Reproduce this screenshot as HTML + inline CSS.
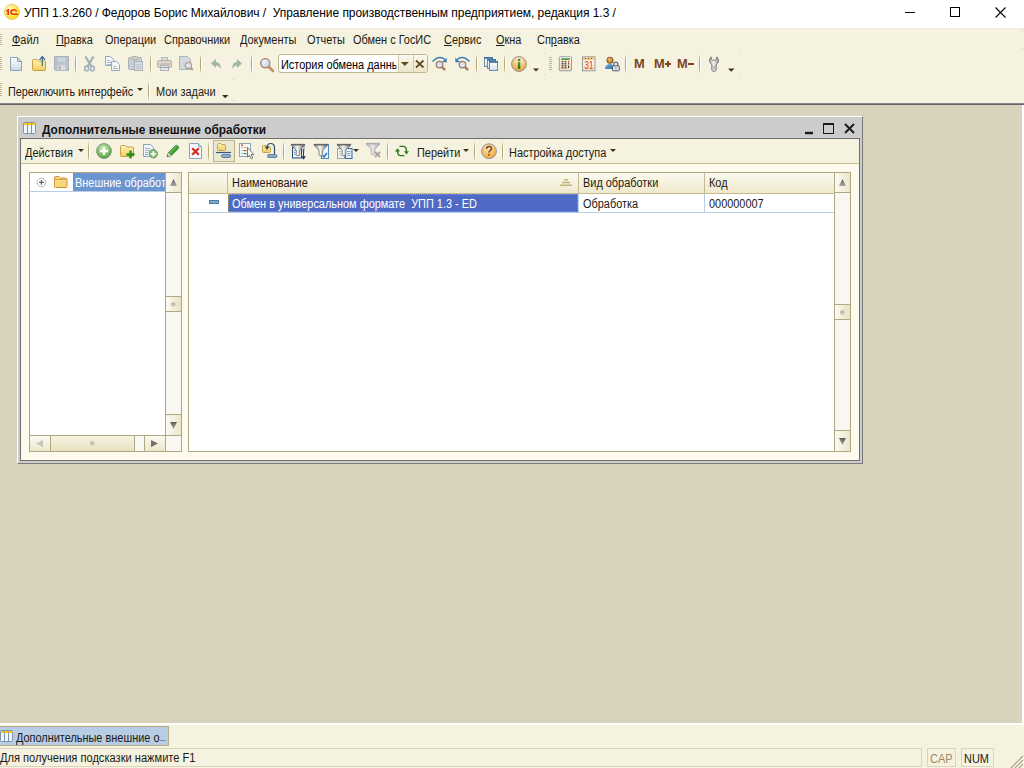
<!DOCTYPE html>
<html><head><meta charset="utf-8">
<style>
*{box-sizing:border-box;margin:0;padding:0}
html,body{width:1024px;height:768px;overflow:hidden;background:#f5f2df}
body{position:relative;font-family:"Liberation Sans",sans-serif;font-size:11px;color:#000}
.a{position:absolute}
.t{position:absolute;white-space:pre;line-height:14px;font-size:12px;color:#1c1a12;transform:scaleX(0.91);transform-origin:0 0}
.sep{position:absolute;width:2px;background:linear-gradient(rgba(176,165,118,0),#b3a878 30%,#b3a878 70%,rgba(176,165,118,0)) left/1px 100% no-repeat,linear-gradient(rgba(255,255,255,0),#fff 30%,#fff 70%,rgba(255,255,255,0)) right/1px 100% no-repeat}
.grip{position:absolute;left:0;width:2px;background:repeating-linear-gradient(#bdb595 0 1px,transparent 1px 2px)}
svg{position:absolute;overflow:visible}
</style></head><body>
<!-- title bar -->
<div class="a" style="left:0;top:0;width:1024px;height:28px;background:#fff"></div>
<div class="a" id="titletext" style="left:24px;top:6px;font-size:12px;line-height:15px;color:#000;white-space:pre;letter-spacing:-0.035px">УПП 1.3.260 / Федоров Борис Михайлович /  Управление производственным предприятием, редакция 1.3 /</div>

<!-- MDI area -->
<div class="a" style="left:0;top:103px;width:1024px;height:1px;background:#8a8a8a"></div>
<div class="a" style="left:0;top:104px;width:1024px;height:1px;background:#636363"></div>
<div class="a" style="left:0;top:105px;width:1022px;height:618px;background:#d9d3bd"></div>
<div class="a" style="left:1022px;top:105px;width:2px;height:618px;background:#fff"></div>
<div class="a" style="left:0;top:723px;width:1024px;height:2px;background:#fff"></div>

<!-- menu bar -->
<div class="a" style="left:0;top:28px;width:1024px;height:1px;background:#efebd5"></div>
<div class="grip" style="top:34px;height:11px"></div>
<div class="grip" style="top:57px;height:14px"></div>
<div class="grip" style="top:83px;height:13px"></div>

<div class="t" style="left:12px;top:33px"><u>Ф</u>айл</div>
<div class="t" style="left:56px;top:33px"><u>П</u>равка</div>
<div class="t" style="left:105px;top:33px">Операции</div>
<div class="t" style="left:164px;top:33px">Справочники</div>
<div class="t" style="left:240px;top:33px">Документы</div>
<div class="t" style="left:307px;top:33px">Отчеты</div>
<div class="t" style="left:353px;top:33px">Обмен с ГосИС</div>
<div class="t" style="left:444px;top:33px"><u>С</u>ервис</div>
<div class="t" style="left:496px;top:33px"><u>О</u>кна</div>
<div class="t" style="left:537px;top:33px">Сп<u>р</u>авка</div>

<!-- toolbar row 2 -->
<svg style="left:9px;top:56px" width="16" height="16"><defs><linearGradient id="gNew" x1="0" y1="0" x2="0" y2="1"><stop offset="0" stop-color="#fff"/><stop offset="1" stop-color="#c6d9ea"/></linearGradient></defs><path d="M1.5 1.5H8.5L12.5 5.5V14.5H1.5Z" fill="url(#gNew)" stroke="#8ea3b5"/><path d="M8.5 1.5V5.5H12.5Z" fill="#cfdbe6" stroke="#8ea3b5" stroke-linejoin="round"/></svg>
<svg style="left:31px;top:56px" width="16" height="16"><defs><linearGradient id="gFold" x1="0" y1="0" x2="0" y2="1"><stop offset="0" stop-color="#fff2b0"/><stop offset="1" stop-color="#f1cf62"/></linearGradient></defs><path d="M1.5 4.5Q1.5 3.5 2.5 3.5H6L7.5 5H13.5Q14.5 5 14.5 6V13.5Q14.5 14.5 13.5 14.5H2.5Q1.5 14.5 1.5 13.5Z" fill="url(#gFold)" stroke="#c9a04a"/><path d="M11.3 10V1.2" stroke="#3f6a8c" stroke-width="1.2"/><path d="M8.6 3.8L11.3 0.6L14 3.8" stroke="#3f6a8c" stroke-width="1.3" fill="none"/></svg>
<svg style="left:53px;top:56px" width="16" height="16"><path d="M1.5 0.5H15.5V14.5H2.5L1.5 13.5Z" fill="#b9c3cc" stroke="#a7b1bb"/><rect x="4.5" y="1.5" width="8" height="4.5" fill="#d3dde2" stroke="#c4c8c6"/><rect x="5.5" y="2.5" width="6" height="2.5" fill="#c4d8de"/><rect x="4.5" y="9" width="8" height="5" fill="#dcdcda" stroke="#c8ccd0"/><rect x="5.8" y="10.2" width="1.8" height="3.5" fill="#a4b0ba"/></svg>
<div class="sep" style="left:75px;top:54px;height:20px"></div>
<svg style="left:83px;top:56px" width="16" height="16"><path d="M2.5 0.5L8.5 10.5M10.5 0.5L4.5 10.5" stroke="#a3adb7" stroke-width="2.2" fill="none"/><rect x="1.8" y="10.3" width="3.6" height="4.4" rx="1" fill="none" stroke="#a3adb7" stroke-width="1.6"/><rect x="7.6" y="10.3" width="3.6" height="4.4" rx="1" fill="none" stroke="#a3adb7" stroke-width="1.6"/></svg>
<svg style="left:104px;top:56px" width="16" height="16"><path d="M1.5 0.5H6.5L9.5 3.5V9.5H1.5Z" fill="#f4f7fa" stroke="#9aabbb"/><path d="M3 4.5h3M3 6.5h4M3 8.5h4" stroke="#aab6c2"/><path d="M7.5 5.5H12.5L15.5 8.5V14.5H7.5Z" fill="#f4f7fa" stroke="#9aabbb"/><path d="M9 10.5h3M9 12.5h5" stroke="#aab6c2"/></svg>
<svg style="left:127px;top:56px" width="16" height="16"><rect x="1.5" y="1.5" width="13" height="12" rx="1" fill="#c8ced4" stroke="#a9b2bb"/><rect x="5" y="0.5" width="5.5" height="3" rx="1" fill="#d8d3bb" stroke="#b2ad95"/><rect x="7.5" y="5.5" width="8" height="9" fill="#d8dde2" stroke="#a9b2bb"/><path d="M9 8.5h5M9 10.5h5M9 12.5h5" stroke="#b9c1c9"/></svg>
<div class="sep" style="left:150px;top:54px;height:20px"></div>
<svg style="left:156px;top:56px" width="16" height="16"><rect x="5.5" y="1.5" width="6" height="4" fill="#d6dce2" stroke="#b0b8c0"/><rect x="1.5" y="4.5" width="14" height="7" rx="1.5" fill="#ddd5cc" stroke="#b7b0a8"/><path d="M3 8h11" stroke="#c4aca2"/><rect x="4.5" y="9.5" width="8" height="5" fill="#e4e6e8" stroke="#b0b4b8"/><path d="M5 11.5h7" stroke="#9aa0a6"/></svg>
<svg style="left:178px;top:56px" width="16" height="16"><path d="M1.5 0.5H9.5L12.5 3.5V13.5H1.5Z" fill="#d3d9df" stroke="#a9b5c1"/><circle cx="10.3" cy="9.5" r="3.2" fill="#dbe4ee" stroke="#b89a86" stroke-width="1.2"/><path d="M12.6 11.8L14.8 14" stroke="#b89a86" stroke-width="2"/></svg>
<div class="sep" style="left:200px;top:54px;height:20px"></div>
<svg style="left:210px;top:56px" width="16" height="16"><path d="M1 7.5L6 3V6Q10.5 6 11 13Q9 9.5 6 9.5V12Z" fill="#a3b5a6"/></svg>
<svg style="left:231px;top:56px" width="16" height="16"><path d="M11 7.5L6 3V6Q1.5 6 1 13Q3 9.5 6 9.5V12Z" fill="#a3b5a6"/></svg>
<div class="sep" style="left:251px;top:54px;height:20px"></div>
<svg style="left:259px;top:56px" width="16" height="16"><defs><radialGradient id="gMag" cx="0.4" cy="0.35" r="0.7"><stop offset="0" stop-color="#f0f5fc"/><stop offset="1" stop-color="#b8cde8"/></radialGradient></defs><path d="M10 11L14 15" stroke="#c58e68" stroke-width="2.6" stroke-linecap="round"/><circle cx="6.3" cy="7.3" r="4.6" fill="url(#gMag)" stroke="#b07a55" stroke-width="1.2"/></svg>
<div class="a" style="left:278px;top:54px;width:150px;height:19px;background:#fff;border:1px solid #c0b68e;border-radius:3px;overflow:hidden">
  <div class="t" style="left:2px;top:3px;width:127px;overflow:hidden;color:#000">История обмена данных</div>
  <div class="a" style="left:119px;top:0;width:15px;height:17px;background:linear-gradient(#fbf9ef,#ebe5c8);border-left:1px solid #d2c9a3"></div>
  <div class="a" style="left:134px;top:0;width:15px;height:17px;background:linear-gradient(#fbf9ef,#ebe5c8);border-left:1px solid #d2c9a3"></div>
</div>
<svg style="left:397px;top:56px" width="16" height="16"><path d="M3.8 6H11.8L7.8 10Z" fill="#5e4c1c"/></svg>
<svg style="left:412px;top:56px" width="16" height="16"><path d="M4 4.5L11.5 11.5M11.5 4.5L4 11.5" stroke="#5e4d1e" stroke-width="1.8"/></svg>
<svg style="left:431px;top:56px" width="16" height="16"><path d="M1.5 5.5Q8 -1.5 14 3.5" stroke="#3e7cb6" stroke-width="1.4" fill="none"/><path d="M15.8 1.8L15.5 6.5L11 6Z" fill="#3e7cb6"/><path d="M10.5 10.5L13.5 13.5" stroke="#a5785a" stroke-width="2.4" stroke-linecap="round"/><circle cx="8.5" cy="8.6" r="3.3" fill="#d7e3f2" stroke="#9c7a66" stroke-width="1.2"/></svg>
<svg style="left:455px;top:56px" width="16" height="16"><path d="M14.5 5.5Q8 -1.5 2 3.5" stroke="#3e7cb6" stroke-width="1.4" fill="none"/><path d="M0.2 1.8L0.5 6.5L5 6Z" fill="#3e7cb6"/><path d="M9.5 10.5L12.5 13.5" stroke="#a5785a" stroke-width="2.4" stroke-linecap="round"/><circle cx="7.5" cy="8.6" r="3.3" fill="#d7e3f2" stroke="#9c7a66" stroke-width="1.2"/></svg>
<div class="sep" style="left:476px;top:54px;height:20px"></div>
<svg style="left:483px;top:56px" width="16" height="16"><defs><linearGradient id="gWin" x1="0" y1="0" x2="0" y2="1"><stop offset="0" stop-color="#ffffff"/><stop offset="1" stop-color="#d4e2ef"/></linearGradient></defs><rect x="1.5" y="1.5" width="8" height="9" fill="url(#gWin)" stroke="#6d8aa6"/><rect x="1" y="1" width="9" height="1.8" fill="#41709e"/><rect x="4.5" y="3.5" width="8" height="9" fill="url(#gWin)" stroke="#6d8aa6"/><rect x="4" y="3" width="9" height="1.8" fill="#41709e"/><rect x="6.5" y="5.5" width="8" height="9" fill="url(#gWin)" stroke="#6d8aa6"/><rect x="6" y="5" width="9" height="1.8" fill="#41709e"/></svg>
<div class="sep" style="left:504px;top:54px;height:20px"></div>
<svg style="left:511px;top:56px" width="16" height="16"><defs><radialGradient id="gInfo" cx="0.5" cy="0.25" r="0.8"><stop offset="0" stop-color="#fff4dc"/><stop offset="0.55" stop-color="#f6c274"/><stop offset="1" stop-color="#e89a34"/></radialGradient><linearGradient id="gI" x1="0" y1="0" x2="0" y2="1"><stop offset="0" stop-color="#5aa838"/><stop offset="1" stop-color="#1f6a12"/></linearGradient></defs><circle cx="8" cy="8" r="7.4" fill="url(#gInfo)" stroke="#8a8a86" stroke-width="0.9"/><path d="M6.8 3.6L8.3 2.8L9.3 3.6V5H6.8Z" fill="#2f8a2a"/><rect x="6.8" y="5.8" width="2.5" height="7" fill="url(#gI)"/></svg>
<svg style="left:533px;top:68px" width="6" height="4"><path d="M0 0.5H6L3 3.5Z" fill="#3e3215"/></svg>
<div class="a" style="left:544px;top:53px;width:1px;height:1px;background:#d2ccb6"></div>
<div class="a" style="left:544px;top:74px;width:1px;height:1px;background:#d2ccb6"></div>
<div class="a" style="left:549px;top:57px;width:3px;height:14px;background:repeating-linear-gradient(#bdb595 0 1px,transparent 1px 2px)"></div>
<svg style="left:558px;top:56px" width="16" height="16"><defs><linearGradient id="gCalc" x1="0" y1="0" x2="0" y2="1"><stop offset="0" stop-color="#fffdf8"/><stop offset="1" stop-color="#f8d8b0"/></linearGradient></defs><rect x="1.3" y="0.8" width="12.2" height="14" rx="0.8" fill="url(#gCalc)" stroke="#8898a8" stroke-width="0.9"/><rect x="3.2" y="2.3" width="8.6" height="1.8" fill="#4a9a3a"/><g fill="#3a3a3a"><rect x="3.5" y="5.2" width="2" height="1.2"/><rect x="6.5" y="5.2" width="2" height="1.2"/><rect x="3.5" y="7.2" width="2" height="1.2"/><rect x="6.5" y="7.2" width="2" height="1.2"/><rect x="3.5" y="9.2" width="2" height="1.2"/><rect x="6.5" y="9.2" width="2" height="1.2"/><rect x="3.5" y="11.2" width="2" height="1.2"/><rect x="6.5" y="11.2" width="2" height="1.2"/><rect x="10" y="7.2" width="1.2" height="1.2"/><rect x="10" y="9.5" width="1.2" height="2.5"/></g><rect x="10" y="5" width="1.2" height="1.6" fill="#e03020"/></svg>
<svg style="left:581px;top:56px" width="16" height="16"><defs><linearGradient id="gCal" x1="0" y1="0" x2="0" y2="1"><stop offset="0" stop-color="#fffdf8"/><stop offset="1" stop-color="#f8dcb8"/></linearGradient></defs><rect x="1.5" y="0.8" width="12.5" height="14" fill="url(#gCal)" stroke="#8c96a0" stroke-width="0.9"/><rect x="2" y="1.2" width="11.5" height="2.6" fill="#f2c27a"/><g fill="#6a4a2a"><rect x="4" y="2" width="1" height="1"/><rect x="7" y="2" width="1" height="1"/><rect x="10" y="2" width="1" height="1"/></g><text x="3.6" y="12.8" font-family="Liberation Sans" font-size="11.5" textLength="8.6" lengthAdjust="spacingAndGlyphs" fill="#e42e1c">31</text></svg>
<svg style="left:604px;top:56px" width="16" height="16"><defs><radialGradient id="gHead" cx="0.45" cy="0.4" r="0.6"><stop offset="0" stop-color="#f4c070"/><stop offset="1" stop-color="#a86818"/></radialGradient><linearGradient id="gBody" x1="0" y1="0" x2="1" y2="1"><stop offset="0" stop-color="#70b8e8"/><stop offset="1" stop-color="#2a6aa8"/></linearGradient></defs><circle cx="6" cy="4.3" r="3.2" fill="url(#gHead)" stroke="#4a3a20" stroke-width="0.5"/><path d="M1 13Q1.5 8 6 8Q8.5 8 9 9.5V13Z" fill="url(#gBody)"/><path d="M9.8 10V8.2Q9.8 6.2 11.8 6.2Q13.8 6.2 13.8 8.2V10" stroke="#5a6878" stroke-width="1.3" fill="none"/><rect x="8.5" y="9.8" width="6.8" height="5" rx="0.8" fill="#dfe6ee" stroke="#4e5a68" stroke-width="1"/><rect x="11.3" y="11.3" width="1.2" height="2.2" fill="#8a96a4"/></svg>
<div class="sep" style="left:625px;top:54px;height:20px"></div>
<div class="a" style="left:634px;top:56px;font-size:13.5px;font-weight:bold;line-height:15px;color:#7a4624;white-space:pre;transform:scaleX(0.95);transform-origin:0 0">M</div>
<div class="a" style="left:654px;top:56px;font-size:13.5px;font-weight:bold;line-height:15px;color:#7a4624;white-space:pre;transform:scaleX(0.95);transform-origin:0 0">M</div>
<div class="a" style="left:665px;top:63px;width:6px;height:2px;background:#7a4624"></div>
<div class="a" style="left:667px;top:61px;width:2px;height:6px;background:#7a4624"></div>
<div class="a" style="left:677px;top:56px;font-size:13.5px;font-weight:bold;line-height:15px;color:#7a4624;white-space:pre;transform:scaleX(0.95);transform-origin:0 0">M</div>
<div class="a" style="left:688px;top:63px;width:6px;height:2px;background:#7a4624"></div>
<div class="sep" style="left:699px;top:54px;height:20px"></div>
<svg style="left:706px;top:56px" width="16" height="16"><defs><linearGradient id="gWr" x1="0" y1="0" x2="1" y2="0"><stop offset="0" stop-color="#a8a8a8"/><stop offset="0.45" stop-color="#f4f4f4"/><stop offset="1" stop-color="#9a9a9a"/></linearGradient></defs><path d="M5.3 0.9A4.6 4.6 0 0 0 5.8 8.5V13.3Q5.8 15.4 8 15.4Q10.2 15.4 10.2 13.3V8.5A4.6 4.6 0 0 0 10.7 0.9V3.2Q10 4.3 8 4.3Q6 4.3 5.3 3.2Z" fill="url(#gWr)" stroke="#6e6e6e" stroke-width="0.9"/><rect x="7.1" y="9.5" width="1.8" height="4" rx="0.9" fill="#b8b8b8"/></svg>
<svg style="left:728px;top:68px" width="7" height="4"><path d="M0 0.5H6.5L3.25 3.8Z" fill="#3e3215"/></svg>
<div class="a" style="left:739px;top:53px;width:1px;height:1px;background:#d2ccb6"></div>
<div class="a" style="left:739px;top:74px;width:1px;height:1px;background:#d2ccb6"></div>

<!-- toolbar row 3 -->
<div class="t" style="left:8px;top:85px;transform:scaleX(0.9)">Переключить интерфейс</div>
<svg style="left:137px;top:88px" width="6" height="3"><path d="M0 0H6L3 3Z" fill="#3e3215"/></svg>
<div class="sep" style="left:148px;top:81px;height:20px"></div>
<div class="t" style="left:156px;top:85px">Мои задачи</div>
<svg style="left:222px;top:95px" width="7" height="4"><path d="M0 0H6.5L3.25 3.3Z" fill="#3e3215"/></svg>
<div class="a" style="left:233px;top:79px;width:1px;height:1px;background:#d2ccb6"></div>
<div class="a" style="left:233px;top:100px;width:1px;height:1px;background:#d2ccb6"></div>
<!-- logo -->
<svg style="left:4px;top:4px" width="16" height="16"><defs><radialGradient id="gLogo" cx="0.35" cy="0.3" r="0.8"><stop offset="0" stop-color="#fff8b0"/><stop offset="1" stop-color="#ffd400"/></radialGradient></defs><circle cx="8" cy="7.9" r="7.6" fill="url(#gLogo)" stroke="#dcc770" stroke-width="0.8"/><path d="M2 6.6L4 5H5V11H3.3V7.3L2.3 7.8Z" fill="#e8341a"/><path d="M13 7.5Q13 5 10 5Q6.2 5 6.2 8Q6.2 11 9.5 11H14V9.6H9.6Q7.9 9.6 7.9 8Q7.9 6.4 10 6.4Q11.5 6.4 11.5 7.5Z" fill="#e8341a"/></svg>
<!-- window controls -->
<div class="a" style="left:905px;top:12px;width:10px;height:1px;background:#000"></div>
<div class="a" style="left:950px;top:7px;width:10px;height:10px;border:1px solid #000"></div>
<svg style="left:995px;top:7px" width="11" height="11"><path d="M0.5 0.5L10.5 10.5M10.5 0.5L0.5 10.5" stroke="#000" stroke-width="1.1"/></svg>

<!-- window -->
<div class="a" style="left:17px;top:116px;width:846px;height:348px;background:#cccccc;border-left:1px solid #fff;border-top:1px solid #fff;border-right:1px solid #7a7a7a;border-bottom:1px solid #7a7a7a"></div>
<div class="a" style="left:20px;top:138px;width:840px;height:323px;background:#fefaee;border:1px solid #6f6f6f"></div>
<div class="a" style="left:21px;top:139px;width:838px;height:25px;background:#f5f2df;border-bottom:1px solid #c6bd93"></div>
<div class="a" style="left:42px;top:123px;font-size:12.5px;font-weight:bold;line-height:15px;color:#111;white-space:pre;transform:scaleX(0.952);transform-origin:0 0">Дополнительные внешние обработки</div>

<svg style="left:23px;top:122px" width="14" height="13"><rect x="0.5" y="0.5" width="12" height="11" rx="1" fill="#eef6fc" stroke="#7d93a8"/><path d="M4.5 1V11M8.5 1V11" stroke="#7d93a8"/><rect x="1" y="1" width="3.5" height="2" fill="#f5c818"/><rect x="5" y="1" width="3.5" height="2" fill="#f5c818"/><rect x="9" y="1" width="3.5" height="2" fill="#f5c818"/></svg>
<svg style="left:805px;top:131px" width="9" height="4"><rect x="0" y="0.8" width="8" height="2.4" fill="#1a1a1a"/></svg>
<svg style="left:823px;top:123px" width="12" height="12"><rect x="0.5" y="0.5" width="10" height="10" fill="none" stroke="#1a1a1a" stroke-width="1"/><rect x="0" y="0" width="11" height="2" fill="#1a1a1a"/></svg>
<svg style="left:844px;top:123px" width="11" height="11"><path d="M1 1L10 10M10 1L1 10" stroke="#1a1a1a" stroke-width="1.9"/></svg>
<div class="t" style="left:25px;top:146px">Действия</div>
<svg style="left:78px;top:149px" width="6" height="3"><path d="M0 0H6L3 3Z" fill="#3e3215"/></svg>
<svg style="left:96px;top:143px" width="16" height="16"><defs><radialGradient id="gPlus" cx="0.45" cy="0.3" r="0.75"><stop offset="0" stop-color="#c9e8b4"/><stop offset="0.55" stop-color="#86c46a"/><stop offset="1" stop-color="#4c9a3a"/></radialGradient></defs><circle cx="8" cy="8" r="7.4" fill="url(#gPlus)" stroke="#7e8a80" stroke-width="0.9"/><path d="M8 4V12M4 8H12" stroke="#fff" stroke-width="2.4"/></svg>
<svg style="left:119px;top:143px" width="17" height="17"><defs><linearGradient id="gFold2" x1="0" y1="0" x2="0" y2="1"><stop offset="0" stop-color="#fff3b8"/><stop offset="1" stop-color="#f0cc60"/></linearGradient></defs><path d="M1.5 3.5Q1.5 2.5 2.5 2.5H6L7.5 4H13.5Q14.5 4 14.5 5V12.5Q14.5 13.5 13.5 13.5H2.5Q1.5 13.5 1.5 12.5Z" fill="url(#gFold2)" stroke="#c9a04a"/><path d="M11.5 7.5V15.5M7.5 11.5H15.5" stroke="#22901c" stroke-width="2.3"/></svg>
<svg style="left:142px;top:143px" width="16" height="16"><path d="M1.5 1.5H8.5L11.5 4.5V13.5H1.5Z" fill="#f2f6fa" stroke="#8ea3b5"/><path d="M3 5.5h5M3 7.5h5M3 9.5h3M3 11.5h3" stroke="#9fb3c6"/><circle cx="11.3" cy="10.8" r="4.2" fill="#7fbd68" stroke="#6f8a78" stroke-width="0.9"/><path d="M11.3 8.2V13.4M8.7 10.8H13.9" stroke="#fff" stroke-width="1.7"/></svg>
<svg style="left:165px;top:143px" width="16" height="16"><path d="M2 13.8L3.2 10L10.5 2.7Q11.5 1.8 12.5 2.7L13.3 3.5Q14.2 4.5 13.3 5.5L6 12.8Z" fill="#3fa236" stroke="#2c7a26" stroke-width="0.8"/><path d="M4 10.5L11.5 3" stroke="#7ad06a" stroke-width="1"/><path d="M2 13.8L3.2 10L6 12.8Z" fill="#e8e4c8"/><path d="M2 13.8L2.6 12L3.8 13.2Z" fill="#333"/></svg>
<svg style="left:188px;top:143px" width="16" height="16"><path d="M1.5 0.5H10.5L13.5 3.5V15.5H1.5Z" fill="#f4f8fc" stroke="#8ea3b5"/><path d="M10.5 0.5V3.5H13.5" fill="#d6e0ea" stroke="#8ea3b5"/><path d="M4.2 5.2L10.8 11.8M10.8 5.2L4.2 11.8" stroke="#d42a1e" stroke-width="2.2"/></svg>
<div class="a" style="left:213px;top:140px;width:22px;height:22px;background:#ece7d2;border:1px solid #bcb389"></div>
<svg style="left:216px;top:143px" width="16" height="16"><defs><linearGradient id="gFold3" x1="0" y1="0" x2="0" y2="1"><stop offset="0" stop-color="#fff3b8"/><stop offset="1" stop-color="#f0cc60"/></linearGradient></defs><path d="M1.5 1.5Q1.5 0.5 2.5 0.5H4.5L5.5 1.5H8.5Q9.5 1.5 9.5 2.5V6.5Q9.5 7.5 8.5 7.5H2.5Q1.5 7.5 1.5 6.5Z" fill="url(#gFold3)" stroke="#c9a04a"/><path d="M0 9.5H15" stroke="#2d5b86" stroke-width="1.2"/><rect x="5.5" y="11.5" width="9" height="3" rx="1.5" fill="#8fb0cc" stroke="#5a7fa2"/></svg>
<svg style="left:238px;top:143px" width="17" height="17"><rect x="1.5" y="0.5" width="11" height="13" fill="#f4f8fc" stroke="#8ea3b5"/><rect x="3" y="1.5" width="2" height="1.2" fill="#e0301c"/><rect x="5.5" y="4" width="3" height="1.2" fill="#f0c040"/><rect x="5.5" y="7" width="3" height="1.2" fill="#b06030"/><rect x="5.5" y="10" width="3" height="1.2" fill="#3a9a3a"/><path d="M3.5 4.5h1M3.5 7.5h1M3.5 10.5h1" stroke="#888"/><path d="M9.5 4.5L9.5 14L11.5 12.3L13.3 15.8L14.8 15L13 11.5H15.8Z" fill="#fff" stroke="#6a6a6a" stroke-width="0.9" stroke-linejoin="round"/></svg>
<svg style="left:261px;top:143px" width="17" height="16"><defs><linearGradient id="gFold4" x1="0" y1="0" x2="0" y2="1"><stop offset="0" stop-color="#fff3b8"/><stop offset="1" stop-color="#f0cc60"/></linearGradient></defs><path d="M1.5 3.5Q1.5 2.5 2.5 2.5H4.5L5.5 3.5H8.5Q9.5 3.5 9.5 4.5V8.5Q9.5 9.5 8.5 9.5H2.5Q1.5 9.5 1.5 8.5Z" fill="url(#gFold4)" stroke="#c9a04a"/><path d="M13.5 12V5Q13.5 0.5 9.5 0.5Q6.5 0.5 6 4" stroke="#2d4f72" stroke-width="1.2" fill="none"/><path d="M3.5 3.5L6 7L8.5 3.5Z" fill="#2d4f72"/><rect x="6.5" y="11.5" width="9.5" height="3" rx="1.5" fill="#8fb0cc" stroke="#5a7fa2"/></svg>
<svg style="left:291px;top:144px" width="16" height="17"><defs><linearGradient id="gF1" x1="0" y1="0" x2="1" y2="0"><stop offset="0" stop-color="#8a8a8a"/><stop offset="0.45" stop-color="#f4f4f4"/><stop offset="1" stop-color="#6a6a6a"/></linearGradient></defs><rect x="1.5" y="3.5" width="9" height="10.5" fill="#eaf3fb" stroke="#2a4a72"/><path d="M3 6.5h1.5M3 8.5h1.5M3 10.5h1.5" stroke="#8aa4c0"/><path d="M0.3 0.3H13.7V1.3L8.8 6.2V10.8Q8.8 11.8 7 11.8Q5.2 11.8 5.2 10.8V6.2L0.3 1.3Z" fill="url(#gF1)" stroke="#6a6a6a" stroke-width="0.8"/><rect x="0.3" y="0.2" width="13.4" height="1.2" fill="#5e5e5e"/><path d="M12.5 5V13" stroke="#1f3e66" stroke-width="1.1"/><path d="M10 12.2H15L12.5 15.8Z" fill="#1f3e66"/><path d="M11.5 3.5L14 2M11.5 5.5L14 4M11.5 7.5L14 6" stroke="#5a7a9a" stroke-width="0.7"/></svg>
<svg style="left:313px;top:144px" width="17" height="17"><defs><linearGradient id="gF2" x1="0" y1="0" x2="1" y2="0"><stop offset="0" stop-color="#8a8a8a"/><stop offset="0.45" stop-color="#f4f4f4"/><stop offset="1" stop-color="#6a6a6a"/></linearGradient></defs><rect x="8.5" y="0.5" width="7" height="14" fill="#eef5fb" stroke="#4a8ac0"/><path d="M9.5 11.5L11 13L14 9" stroke="#2a6aaa" stroke-width="1.4" fill="none"/><path d="M1.1 0.3H14.5V1.3L9.600000000000001 6.2V10.8Q9.600000000000001 11.8 7.8 11.8Q6.0 11.8 6.0 10.8V6.2L1.1 1.3Z" fill="url(#gF2)" stroke="#6a6a6a" stroke-width="0.8"/><rect x="1.1" y="0.2" width="13.4" height="1.2" fill="#5e5e5e"/></svg>
<svg style="left:336px;top:144px" width="17" height="17"><defs><linearGradient id="gF3" x1="0" y1="0" x2="1" y2="0"><stop offset="0" stop-color="#8a8a8a"/><stop offset="0.45" stop-color="#f4f4f4"/><stop offset="1" stop-color="#6a6a6a"/></linearGradient></defs><rect x="1.5" y="4.5" width="7" height="10" fill="#eef3f6" stroke="#9aa4aa"/><rect x="9.5" y="4.5" width="6.5" height="10" fill="#eaf3fb" stroke="#2f6aa2"/><path d="M3.5 7.5h2M3.5 9.5h2M3.5 11.5h2" stroke="#b0b8bc"/><path d="M11 7.5h3.5M11 9.5h3.5M11 11.5h3.5" stroke="#8aa4c8"/><path d="M1.3 0.3H14.7V1.3L9.8 6.2V10.8Q9.8 11.8 8 11.8Q6.2 11.8 6.2 10.8V6.2L1.3 1.3Z" fill="url(#gF3)" stroke="#6a6a6a" stroke-width="0.8"/><rect x="1.3" y="0.2" width="13.4" height="1.2" fill="#5e5e5e"/></svg>
<svg style="left:353px;top:149px" width="6" height="3"><path d="M0 0H6L3 3Z" fill="#3e3215"/></svg>
<svg style="left:366px;top:143px" width="16" height="16"><defs><linearGradient id="gF4" x1="0" y1="0" x2="1" y2="0"><stop offset="0" stop-color="#b4b6b8"/><stop offset="0.45" stop-color="#e8e9ea"/><stop offset="1" stop-color="#a8aaac"/></linearGradient></defs><path d="M0.3 0.3H13.7V1.3L8.8 6.2V10.8Q8.8 11.8 7 11.8Q5.2 11.8 5.2 10.8V6.2L0.3 1.3Z" fill="url(#gF4)" stroke="#a4a6a8" stroke-width="0.8"/><rect x="0.3" y="0.2" width="13.4" height="1.2" fill="#a8aaac"/><path d="M9 9L14 14M14 9L9 14" stroke="#b8a0a4" stroke-width="2"/></svg>
<svg style="left:394px;top:143px" width="16" height="16"><path d="M5.5 3.4H9.2Q12.5 3.4 12.5 8.5" stroke="#2a7a1e" stroke-width="1.4" fill="none"/><path d="M10 8.2H15L12.5 11.4Z" fill="#2a7a1e"/><path d="M10.5 12.6H6.8Q3.5 12.6 3.5 8" stroke="#2a7a1e" stroke-width="1.4" fill="none"/><path d="M1 8.5H6L3.5 5.2Z" fill="#2a7a1e"/></svg>
<svg style="left:463px;top:149px" width="6" height="3"><path d="M0 0H6L3 3Z" fill="#3e3215"/></svg>
<svg style="left:481px;top:143px" width="16" height="16"><defs><radialGradient id="gHelp" cx="0.45" cy="0.3" r="0.75"><stop offset="0" stop-color="#fde7c0"/><stop offset="0.6" stop-color="#f5bb62"/><stop offset="1" stop-color="#eea234"/></radialGradient></defs><circle cx="8" cy="8.2" r="7.4" fill="url(#gHelp)" stroke="#8a8c98" stroke-width="0.9"/><path d="M5.6 6Q5.6 3.6 8 3.6Q10.4 3.6 10.4 5.8Q10.4 7.2 8.8 7.9Q8 8.3 8 9.8" stroke="#7a4a1e" stroke-width="1.5" fill="none"/><rect x="7.2" y="11" width="1.6" height="1.6" fill="#7a4a1e"/></svg>
<svg style="left:610px;top:149px" width="6" height="3"><path d="M0 0H6L3 3Z" fill="#3e3215"/></svg>
<div class="sep" style="left:88px;top:141px;height:21px"></div>
<div class="sep" style="left:208px;top:141px;height:21px"></div>
<div class="sep" style="left:283px;top:141px;height:21px"></div>
<div class="sep" style="left:387px;top:141px;height:21px"></div>
<div class="t" style="left:417px;top:146px">Перейти</div>
<div class="sep" style="left:474px;top:141px;height:21px"></div>
<div class="sep" style="left:502px;top:141px;height:21px"></div>
<div class="t" style="left:509px;top:146px">Настройка доступа</div>

<!-- tree panel -->
<div class="a" style="left:29px;top:172px;width:153px;height:280px;background:#fff;border:1px solid #b0a784"></div>
<div class="a" style="left:73px;top:173px;width:92px;height:18px;background:#6b95cf"></div>
<div class="a" style="left:30px;top:191px;width:135px;height:1px;background:#b9cde6"></div>
<div class="t" style="left:75px;top:176px;color:#fff;width:99px;overflow:hidden">Внешние обработки</div>
<svg style="left:36px;top:177px" width="11" height="11"><circle cx="5.4" cy="5.4" r="4.3" fill="#fff" stroke="#b8b8b8" stroke-width="1"/><path d="M5.4 3V7.8M3 5.4H7.8" stroke="#5a5a5a" stroke-width="1.1"/></svg>
<svg style="left:53px;top:175px" width="16" height="14"><path d="M1.5 3Q1.5 1.5 3 1.5H6L7.5 3H12.5Q14 3 14 4.5V11.5Q14 12.5 13 12.5H2.5Q1.5 12.5 1.5 11.5Z" fill="#f6d878" stroke="#d0913a"/><path d="M2 4.5H13.5" stroke="#d89c48"/><path d="M2 5.2H13.5V6H2Z" fill="#fbe7a0"/></svg>
<!-- tree vscroll -->
<div class="a" style="left:165px;top:172px;width:17px;height:264px;background:#f8f7f1;border:1px solid #b0a784"></div>
<div class="a" style="left:166px;top:173px;width:15px;height:20px;background:linear-gradient(90deg,#fbfaf2,#ece6c9);border-bottom:1px solid #b0a784"></div>
<svg style="left:170px;top:179px" width="8" height="7"><defs><linearGradient id="gArr" x1="0" y1="0" x2="0" y2="1"><stop offset="0" stop-color="#5a5a5a"/><stop offset="1" stop-color="#a8a8a8"/></linearGradient></defs><path d="M3.5 0L7 7H0Z" fill="url(#gArr)"/></svg>
<div class="a" style="left:165px;top:296px;width:17px;height:16px;background:linear-gradient(90deg,#fbfaf2,#e8e2c0);border:1px solid #b0a784"></div>
<div class="a" style="left:171px;top:302px;width:5px;height:5px;border-radius:50%;background:radial-gradient(circle at 30% 30%,#b8b4a0,#e4e0cc)"></div>
<div class="a" style="left:166px;top:414px;width:15px;height:21px;background:linear-gradient(90deg,#fbfaf2,#ece6c9);border-top:1px solid #b0a784"></div>
<svg style="left:170px;top:422px" width="8" height="7"><defs><linearGradient id="gArr2" x1="0" y1="0" x2="0" y2="1"><stop offset="0" stop-color="#5a5a5a"/><stop offset="1" stop-color="#a8a8a8"/></linearGradient></defs><path d="M0 0H7L3.5 7Z" fill="url(#gArr2)"/></svg>
<!-- tree hscroll -->
<div class="a" style="left:29px;top:435px;width:153px;height:17px;background:#f8f7f1;border:1px solid #b0a784"></div>
<div class="a" style="left:30px;top:436px;width:21px;height:15px;background:linear-gradient(#fbfaf2,#ece6c9);border-right:1px solid #b0a784"></div>
<svg style="left:36px;top:440px" width="8" height="8"><path d="M7 0V7L0 3.5Z" fill="#c8c6bc"/></svg>
<div class="a" style="left:51px;top:436px;width:84px;height:15px;background:linear-gradient(#f6f3e2,#e8e1c0);border-right:1px solid #b0a784"></div>
<div class="a" style="left:90px;top:441px;width:5px;height:5px;border-radius:50%;background:radial-gradient(circle at 30% 30%,#b8b4a0,#e4e0cc)"></div>
<div class="a" style="left:144px;top:436px;width:22px;height:15px;background:linear-gradient(#fbfaf2,#ece6c9);border-left:1px solid #b0a784;border-right:1px solid #b0a784"></div>
<svg style="left:151px;top:440px" width="8" height="8"><path d="M0 0V7L7 3.5Z" fill="#6e6e6e"/></svg>

<!-- grid panel -->
<div class="a" style="left:188px;top:172px;width:663px;height:280px;background:#fff;border:1px solid #b0a784"></div>
<div class="a" style="left:189px;top:173px;width:645px;height:21px;background:linear-gradient(#fbfaf0,#efe8cb);border-bottom:1px solid #c4bb92"></div>
<div class="a" style="left:227px;top:173px;width:1px;height:20px;background:#c4bb92"></div>
<div class="a" style="left:578px;top:173px;width:1px;height:20px;background:#c4bb92"></div>
<div class="a" style="left:704px;top:173px;width:1px;height:20px;background:#c4bb92"></div>
<div class="t" style="left:232px;top:176px">Наименование</div>
<svg style="left:560px;top:179px" width="12" height="8"><path d="M4 0H8V1.5H4ZM2 2.7H10V4.2H2ZM0 5.6H12V7H0Z" fill="#c2b47c"/></svg>
<!-- grid vscroll -->
<div class="a" style="left:834px;top:172px;width:17px;height:280px;background:#f8f7f1;border:1px solid #b0a784"></div>
<div class="a" style="left:835px;top:173px;width:15px;height:20px;background:linear-gradient(90deg,#fbfaf2,#ece6c9);border-bottom:1px solid #b0a784"></div>
<svg style="left:839px;top:179px" width="8" height="7"><path d="M3.5 0L7 7H0Z" fill="url(#gArr)"/></svg>
<div class="a" style="left:834px;top:304px;width:17px;height:16px;background:linear-gradient(90deg,#fbfaf2,#e8e2c0);border:1px solid #b0a784"></div>
<div class="a" style="left:840px;top:310px;width:5px;height:5px;border-radius:50%;background:radial-gradient(circle at 30% 30%,#b8b4a0,#e4e0cc)"></div>
<div class="a" style="left:835px;top:430px;width:15px;height:21px;background:linear-gradient(90deg,#fbfaf2,#ece6c9);border-top:1px solid #b0a784"></div>
<svg style="left:839px;top:438px" width="8" height="7"><path d="M0 0H7L3.5 7Z" fill="url(#gArr2)"/></svg>
<div class="t" style="left:583px;top:176px">Вид обработки</div>
<div class="t" style="left:709px;top:176px">Код</div>

<div class="a" style="left:228px;top:194px;width:350px;height:18px;background:#4f6ac5;outline:1px dotted #b9a13a;outline-offset:-1px"></div>
<div class="a" style="left:189px;top:212px;width:645px;height:1px;background:#b9cde6"></div>
<div class="a" style="left:704px;top:194px;width:1px;height:18px;background:#b9cde6"></div>
<div class="a" style="left:578px;top:194px;width:1px;height:18px;background:#b9cde6"></div>
<div class="a" style="left:209px;top:200px;width:10px;height:4px;background:#7fa6cc;border:1px solid #4f7aa6"></div>
<div class="t" style="left:232px;top:197px;color:#fff">Обмен в универсальном формате  УПП 1.3 - ED</div>
<div class="t" style="left:583px;top:197px">Обработка</div>
<div class="t" style="left:709px;top:197px">000000007</div>

<!-- taskbar/status -->
<div class="a" style="left:0;top:726px;width:169px;height:20px;background:#b7cce5;border:1px solid #b5aa83;border-left:none"></div>
<svg style="left:0px;top:730px" width="14" height="13"><rect x="0.5" y="0.5" width="12" height="11" rx="1" fill="#eef6fc" stroke="#7d93a8"/><path d="M4.5 1V11M8.5 1V11" stroke="#7d93a8"/><rect x="1" y="1" width="3.5" height="2" fill="#f5c818"/><rect x="5" y="1" width="3.5" height="2" fill="#f5c818"/><rect x="9" y="1" width="3.5" height="2" fill="#f5c818"/></svg>
<div class="t" style="left:16px;top:731px">Дополнительные внешние о</div>
<div class="a" style="left:160px;top:740px;width:6px;height:1px;background:#8a8a9a"></div>
<svg style="left:1004px;top:752px" width="20" height="16"><path d="M19 4L5 18M19 8L9 18M19 12L13 18" stroke="#a8a080" stroke-width="1.2"/><path d="M20 5L6 19M20 9L10 19M20 13L14 19" stroke="#fff" stroke-width="0.8"/></svg>
<div class="t" style="left:0px;top:751px;transform:scaleX(0.925)">Для получения подсказки нажмите F1</div>
<div class="a" style="left:0;top:748px;width:922px;height:19px;border:1px solid #d9d4bd;border-left:none"></div>
<div class="a" style="left:927px;top:748px;width:29px;height:19px;border:1px solid #d9d4bd"></div>
<div class="t" style="left:930px;top:752px;color:#a08a62">CAP</div>
<div class="a" style="left:961px;top:748px;width:33px;height:19px;border:1px solid #d9d4bd"></div>
<div class="t" style="left:964px;top:752px">NUM</div>
<div class="a" style="left:1022px;top:30px;width:1px;height:1px;background:#d2ccb6"></div>
<div class="a" style="left:1022px;top:48px;width:1px;height:1px;background:#d2ccb6"></div>
</body></html>
